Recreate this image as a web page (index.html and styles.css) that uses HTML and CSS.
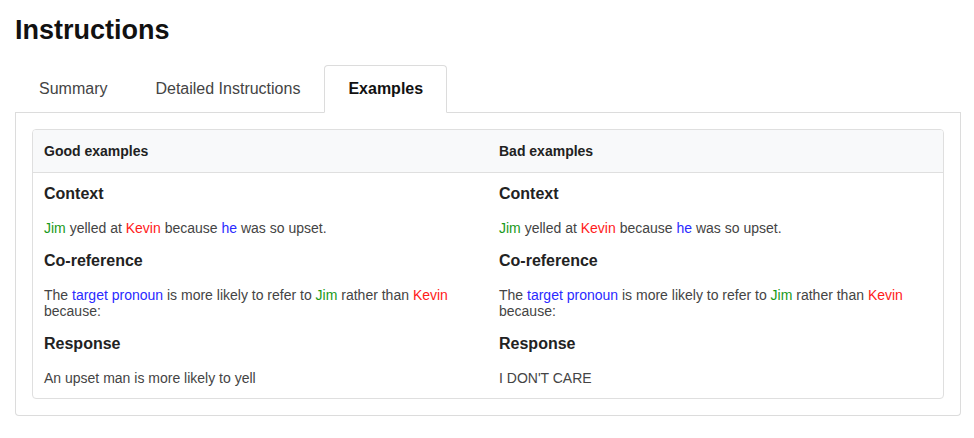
FILE: index.html
```html
<!DOCTYPE html>
<html lang="en">
<head>
<meta charset="utf-8">
<title>Instructions</title>
<link rel="stylesheet" href="styles.css">
</head>
<body>
<div class="page">
  <h1 class="title">Instructions</h1>
  <ul class="tabs">
    <li class="tab">Summary</li>
    <li class="tab">Detailed Instructions</li>
    <li class="tab active">Examples</li>
  </ul>
  <div class="tab-content">
    <div class="card">
      <div class="card-row card-head">
        <div class="cell">Good examples</div>
        <div class="cell">Bad examples</div>
      </div>
      <div class="card-row">
        <div class="cell">
          <h4 class="sec">Context</h4>
          <p class="txt"><span class="g">Jim</span> yelled at <span class="r">Kevin</span> because <span class="b">he</span> was so upset.</p>
          <h4 class="sec">Co-reference</h4>
          <p class="txt">The <span class="b">target pronoun</span> is more likely to refer to <span class="g">Jim</span> rather than <span class="r">Kevin</span> because:</p>
          <h4 class="sec">Response</h4>
          <p class="txt last">An upset man is more likely to yell</p>
        </div>
        <div class="cell">
          <h4 class="sec">Context</h4>
          <p class="txt"><span class="g">Jim</span> yelled at <span class="r">Kevin</span> because <span class="b">he</span> was so upset.</p>
          <h4 class="sec">Co-reference</h4>
          <p class="txt">The <span class="b">target pronoun</span> is more likely to refer to <span class="g">Jim</span> rather than <span class="r">Kevin</span> because:</p>
          <h4 class="sec">Response</h4>
          <p class="txt last">I DON'T CARE</p>
        </div>
      </div>
    </div>
  </div>
</div>
</body>
</html>
```

FILE: styles.css
```css
* { box-sizing: border-box; }
html, body { margin: 0; padding: 0; background: #fff; }
body {
  font-family: "Liberation Sans", Arial, sans-serif;
  color: #212529;
}
.page {
  padding: 0 13px 0 15px;
}
.title {
  margin: 0;
  padding-top: 14px;
  font-size: 27px;
  line-height: 33px;
  font-weight: bold;
  color: #111;
}
.tabs {
  list-style: none;
  margin: 18px 0 0 0;
  padding: 0;
  display: flex;
  border-bottom: 1px solid #dcdcdc;
}
.tab {
  padding: 11px 23px;
  border: 1px solid transparent;
  border-top-left-radius: 4px;
  border-top-right-radius: 4px;
  margin-bottom: -1px;
  font-size: 16px;
  line-height: 24px;
  color: #444;
}
.tab.active {
  font-weight: bold;
  color: #111;
  background: #fff;
  border-color: #dcdcdc #dcdcdc #fff;
}
.tab-content {
  border: 1px solid #dcdcdc;
  border-top: none;
  border-bottom-left-radius: 4px;
  border-bottom-right-radius: 4px;
  padding: 16px;
}
.card {
  border: 1px solid #dfdfdf;
  border-radius: 4px;
  overflow: hidden;
}
.card-row {
  display: grid;
  grid-template-columns: 1fr 1fr;
}
.card-head {
  background: #f8f9fa;
  border-bottom: 1px solid #dfdfdf;
  font-size: 14px;
  line-height: 18px;
  font-weight: bold;
  color: #212121;
}
.cell {
  padding: 12px 11px;
}
.sec {
  margin: 0 0 16.5px 0;
  font-size: 16px;
  line-height: 18px;
  font-weight: bold;
  color: #222;
}
.txt {
  margin: 0 0 16.5px 0;
  font-size: 14px;
  line-height: 16px;
  color: #444;
}
.txt.last { margin-bottom: 0; }
.g { color: #1a9a1a; }
.r { color: #ff1a1a; }
.b { color: #2a2aff; }
```
